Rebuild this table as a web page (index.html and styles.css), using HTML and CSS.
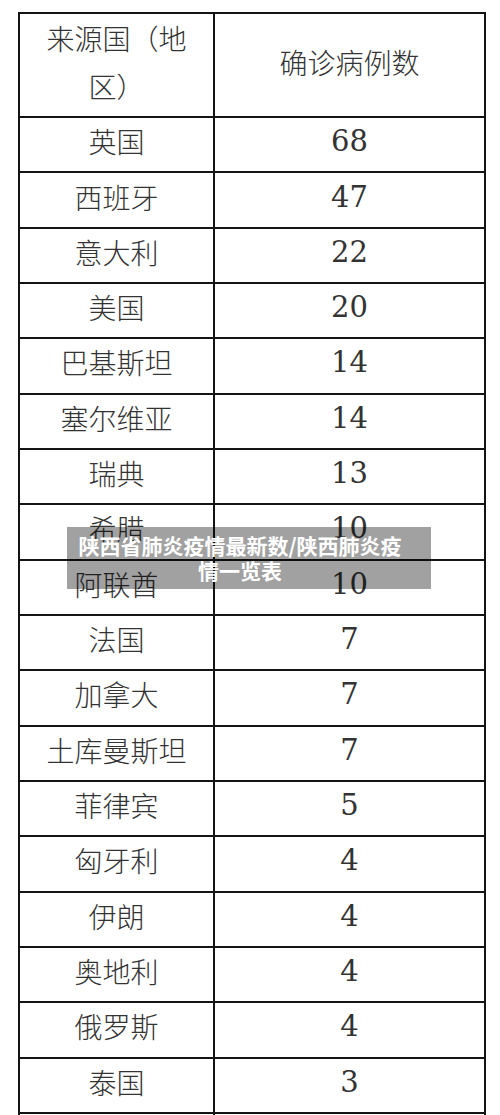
FILE: index.html
```html
<!DOCTYPE html>
<html lang="zh-CN">
<head>
<meta charset="utf-8">
<title>陕西省肺炎疫情最新数/陕西肺炎疫情一览表</title>
<link rel="stylesheet" href="styles.css">
</head>
<body>
<div class="page">
  <div class="table">
    <div class="cell head name">来源国（地区）</div>
    <div class="cell head">确诊病例数</div>
    <div class="cell name">英国</div><div class="cell num">68</div>
    <div class="cell name">西班牙</div><div class="cell num">47</div>
    <div class="cell name">意大利</div><div class="cell num">22</div>
    <div class="cell name">美国</div><div class="cell num">20</div>
    <div class="cell name">巴基斯坦</div><div class="cell num">14</div>
    <div class="cell name">塞尔维亚</div><div class="cell num">14</div>
    <div class="cell name">瑞典</div><div class="cell num">13</div>
    <div class="cell name">希腊</div><div class="cell num">10</div>
    <div class="cell name">阿联酋</div><div class="cell num">10</div>
    <div class="cell name">法国</div><div class="cell num">7</div>
    <div class="cell name">加拿大</div><div class="cell num">7</div>
    <div class="cell name">土库曼斯坦</div><div class="cell num">7</div>
    <div class="cell name">菲律宾</div><div class="cell num">5</div>
    <div class="cell name">匈牙利</div><div class="cell num">4</div>
    <div class="cell name">伊朗</div><div class="cell num">4</div>
    <div class="cell name">奥地利</div><div class="cell num">4</div>
    <div class="cell name">俄罗斯</div><div class="cell num">4</div>
    <div class="cell name">泰国</div><div class="cell num">3</div>
    <div class="cell name"></div><div class="cell num"></div>
  </div>
  <div class="caption">陕西省肺炎疫情最新数/陕西肺炎疫情一览表</div>
</div>
</body>
</html>
```
FILE: styles.css
```css
html, body {
  margin: 0;
  padding: 0;
  background: #ffffff;
}
body {
  width: 500px;
  height: 1115px;
  overflow: hidden;
}
.page {
  position: relative;
  padding: 12px 0 0 18px;
}
.table {
  display: grid;
  grid-template-columns: 193px 269px;
  grid-template-rows: 102px;
  grid-auto-rows: 53.33px;
  gap: 2px;
  padding: 2px;
  background: #141414;
  width: fit-content;
}
.cell {
  background: #ffffff;
  display: flex;
  align-items: center;
  justify-content: center;
  text-align: center;
  padding-bottom: 7px;
  color: #333333;
  font-family: "Noto Sans CJK SC", sans-serif;
  font-weight: 300;
  font-size: 28px;
  line-height: 48px;
}
.head.name {
  padding: 0 24px 7px;
}
.num {
  font-family: "DejaVu Serif", "Liberation Serif", serif;
  font-weight: 400;
  font-size: 29px;
  color: #333333;
}
.head {
  font-family: "Noto Sans CJK SC", sans-serif;
  font-size: 28px;
}
.caption {
  position: absolute;
  left: 67px;
  top: 527px;
  width: 326px;
  padding: 6px 28px 6px 10px;
  background: rgba(0, 0, 0, 0.37);
  color: #ffffff;
  font-family: "Noto Sans CJK SC", sans-serif;
  font-weight: 700;
  font-size: 21px;
  line-height: 25px;
  text-align: center;
}
```
